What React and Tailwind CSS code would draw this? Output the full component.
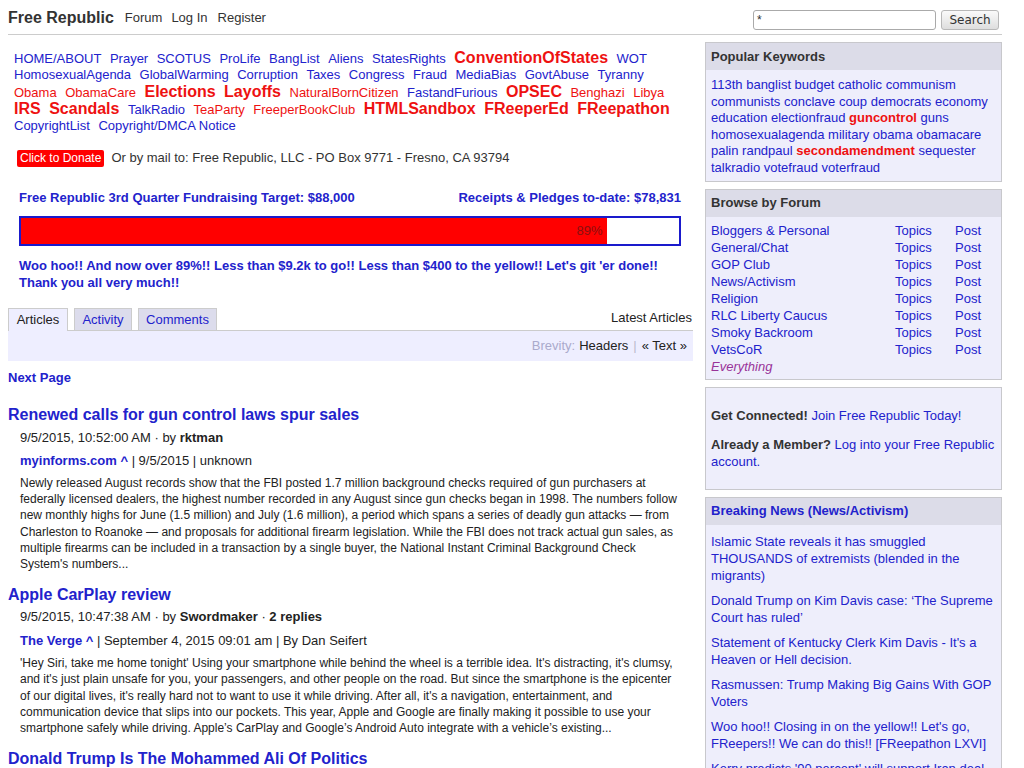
import React from "react";

function Tag({ t, big, red }) {
  if (big)
    return <a className="text-[16px] font-bold text-[#ee1111] leading-[17px]">{t}</a>;
  return <a className={`text-[13px] leading-[17px] ${red ? "text-[#ee1111]" : "text-[#2222cc]"}`}>{t}</a>;
}

const rows = [
  [["HOME/ABOUT"], ["Prayer"], ["SCOTUS"], ["ProLife"], ["BangList"], ["Aliens"], ["StatesRights"], ["ConventionOfStates", 1], ["WOT"]],
  [["HomosexualAgenda"], ["GlobalWarming"], ["Corruption"], ["Taxes"], ["Congress"], ["Fraud"], ["MediaBias"], ["GovtAbuse"], ["Tyranny"]],
  [["Obama", 0, 1], ["ObamaCare", 0, 1], ["Elections", 1], ["Layoffs", 1], ["NaturalBornCitizen", 0, 1], ["FastandFurious"], ["OPSEC", 1], ["Benghazi", 0, 1], ["Libya", 0, 1]],
  [["IRS", 1], ["Scandals", 1], ["TalkRadio"], ["TeaParty", 0, 1], ["FreeperBookClub", 0, 1], ["HTMLSandbox", 1], ["FReeperEd", 1], ["FReepathon", 1]],
  [["CopyrightList"], ["Copyright/DMCA Notice"]],
];

function Article({ title, meta, source, lines, metaGap = "mt-[4px]", sourceGap = "mt-[6px]" }) {
  return (
    <div>
      <h2 className="text-[16px] font-bold text-[#2222cc] leading-[20px]">{title}</h2>
      <div className={`pl-[12px] text-[13px] text-[#222] leading-[17px] ${metaGap}`}>{meta}</div>
      <div className={`pl-[12px] text-[13px] text-[#222] leading-[17px] ${sourceGap}`}>{source}</div>
      <p className="pl-[12px] text-[12px] text-[#222] leading-[16.2px] mt-[6px]">
        {lines.map((l, i) => (
          <span key={i} className="block whitespace-nowrap">{l}</span>
        ))}
      </p>
    </div>
  );
}

function Box({ title, titleBlue, children }) {
  return (
    <div className="border border-[#c8c8cc] bg-[#eeeefb]">
      {title && (
        <div className={`h-[27px] bg-[#dcdce8] px-[5px] flex items-center text-[13px] font-bold ${titleBlue ? "text-[#2222cc]" : "text-[#333]"}`}>
          {title}
        </div>
      )}
      {children}
    </div>
  );
}

const forums = ["Bloggers & Personal", "General/Chat", "GOP Club", "News/Activism", "Religion", "RLC Liberty Caucus", "Smoky Backroom", "VetsCoR"];

const news = [
  "Islamic State reveals it has smuggled THOUSANDS of extremists (blended in the migrants)",
  "Donald Trump on Kim Davis case: \u2018The Supreme Court has ruled\u2019",
  "Statement of Kentucky Clerk Kim Davis - It's a Heaven or Hell decision.",
  "Rasmussen: Trump Making Big Gains With GOP Voters",
  "Woo hoo!! Closing in on the yellow!! Let's go, FReepers!! We can do this!! [FReepathon LXVI]",
  "Kerry predicts '90 percent' will support Iran deal",
];

const art1 = [
  "Newly released August records show that the FBI posted 1.7 million background checks required of gun purchasers at",
  "federally licensed dealers, the highest number recorded in any August since gun checks began in 1998. The numbers follow",
  "new monthly highs for June (1.5 million) and July (1.6 million), a period which spans a series of deadly gun attacks \u2014 from",
  "Charleston to Roanoke \u2014 and proposals for additional firearm legislation. While the FBI does not track actual gun sales, as",
  "multiple firearms can be included in a transaction by a single buyer, the National Instant Criminal Background Check",
  "System's numbers...",
];

const art2 = [
  "'Hey Siri, take me home tonight' Using your smartphone while behind the wheel is a terrible idea. It's distracting, it's clumsy,",
  "and it's just plain unsafe for you, your passengers, and other people on the road. But since the smartphone is the epicenter",
  "of our digital lives, it's really hard not to want to use it while driving. After all, it's a navigation, entertainment, and",
  "communication device that slips into our pockets. This year, Apple and Google are finally making it possible to use your",
  "smartphone safely while driving. Apple\u2019s CarPlay and Google\u2019s Android Auto integrate with a vehicle\u2019s existing...",
];

export default function App() {
  return (
    <div className="w-[994px] ml-2 font-['Liberation_Sans',Arial,sans-serif] text-[13px] text-[#333] bg-white">
      {/* header */}
      <div className="h-[35px] pt-[2px] border-b border-[#cccccc] flex items-center">
        <span className="text-[16px] font-bold text-[#333] leading-[20px]">Free Republic</span>
        <a className="ml-[11px] text-[13px] text-[#333]">Forum</a>
        <a className="ml-[9px] text-[13px] text-[#333]">Log In</a>
        <a className="ml-[10px] text-[13px] text-[#333]">Register</a>
        <div className="ml-auto mr-[3px] mt-[4px] flex items-center gap-[5px]">
          <div className="w-[183px] h-[20px] border border-[#aaa] rounded-[3px] bg-white px-[3px] text-[12px] leading-[18px] text-[#333]">*</div>
          <button className="w-[58px] h-[20px] border border-[#b8b8b8] rounded-[3px] bg-gradient-to-b from-[#fafafa] to-[#dedede] text-[12px] text-[#333] font-['DejaVu_Sans',sans-serif] leading-[18px]">
            Search
          </button>
        </div>
      </div>

      <div className="flex gap-[12px]">
        {/* left column */}
        <div className="w-[685px]">
          <div className="pt-[14px] pl-[6px]">
            {rows.map((r, i) => (
              <div key={i} className="flex items-baseline gap-x-[8.5px] h-[17px] leading-[17px]">
                {r.map(([t, big, red]) => (
                  <Tag key={t} t={t} big={big} red={red} />
                ))}
              </div>
            ))}
          </div>

          <div className="mt-[15px] ml-[9px] flex items-center h-[18px]">
            <span className="bg-[#ff0000] text-white text-[12px] leading-[17px] px-[3px] rounded-[2px]">Click to Donate</span>
            <span className="ml-[7px] text-[13px] text-[#333]">Or by mail to: Free Republic, LLC - PO Box 9771 - Fresno, CA 93794</span>
          </div>

          <div className="ml-[11px] w-[662px] mt-[23px]">
            <div className="flex justify-between text-[13px] font-bold text-[#2222cc] leading-[16px]">
              <span>Free Republic 3rd Quarter Fundraising Target: $88,000</span>
              <span>Receipts &amp; Pledges to-date: $78,831</span>
            </div>
            <div className="mt-[10px] h-[30px] border-2 border-[#1a1acc] bg-white flex">
              <div className="w-[89%] bg-[#ff0000] flex items-center justify-end pr-[4px] text-[13px] text-[#8a1010]">89%</div>
            </div>
            <div className="mt-[11px] text-[13px] font-bold text-[#2222cc] leading-[17px]">
              Woo hoo!! And now over 89%!! Less than $9.2k to go!! Less than $400 to the yellow!! Let's git 'er done!!
              <br />
              Thank you all very much!!
            </div>
          </div>

          {/* tabs */}
          <div className="mt-[17px] flex items-end h-[23px] -mb-px relative z-10">
            <div className="w-[60px] text-center h-[23px] border border-b-0 border-[#cccccc] bg-[#eeeeff] leading-[22px] text-[#222]">Articles</div>
            <div className="w-[58px] text-center ml-[6px] mb-px h-[22px] border border-b-0 border-[#cccccc] bg-[#dcdcec] leading-[22px] text-[#2222cc]">Activity</div>
            <div className="w-[79px] text-center ml-[6px] mb-px h-[22px] border border-b-0 border-[#cccccc] bg-[#dcdcec] leading-[22px] text-[#2222cc]">Comments</div>
            <div className="ml-auto self-start mt-px leading-[17px] mr-px text-[#222]">Latest Articles</div>
          </div>
          <div className="h-[31px] border-t border-[#cccccc] bg-[#eeeeff] flex items-center justify-end pr-[6px] text-[13px]">
            <span className="text-[#aaaacc]">Brevity:</span>
            <span className="ml-[4px] text-[#222]">Headers</span>
            <span className="mx-[5px] text-[#bbbbcc]">|</span>
            <span className="text-[#222]">« Text »</span>
          </div>

          <div className="mt-[8px] text-[13px] font-bold text-[#2222cc] leading-[17px]">Next Page</div>

          <div className="mt-[19px] flex flex-col gap-[13px]">
            <Article
              title="Renewed calls for gun control laws spur sales"
              meta={<>9/5/2015, 10:52:00 AM · by <b>rktman</b></>}
              source={<><b className="text-[#2222cc]">myinforms.com ^</b> | 9/5/2015 | unknown</>}
              lines={art1}
            />
            <Article
              title="Apple CarPlay review"
              meta={<>9/5/2015, 10:47:38 AM · by <b>Swordmaker</b> · <b>2 replies</b></>}
              source={<><b className="text-[#2222cc]">The Verge ^</b> | September 4, 2015 09:01 am | By Dan Seifert</>}
              lines={art2}
              metaGap="mt-[3px]"
              sourceGap="mt-[7px]"
            />
            <div>
              <h2 className="text-[16px] font-bold text-[#2222cc] leading-[20px]">Donald Trump Is The Mohammed Ali Of Politics</h2>
              <div className="pl-[12px] text-[13px] text-[#222] leading-[17px] mt-[4px]">
                9/5/2015, 10:40:12 AM · by <b>Elderberry</b>
              </div>
            </div>
          </div>
        </div>

        {/* right column */}
        <div className="w-[297px] pt-[7px] flex flex-col gap-[7px]">
          <Box title="Popular Keywords">
            <div className="px-[5px] pt-[7px] pb-[4px] text-[13px] leading-[16.6px] text-[#2222cc]">
              113th banglist budget catholic communism communists conclave coup democrats economy education electionfraud{" "}
              <b className="text-[#ee1111]">guncontrol</b> guns homosexualagenda military obama obamacare palin randpaul{" "}
              <b className="text-[#ee1111]">secondamendment</b> sequester talkradio votefraud voterfraud
            </div>
          </Box>

          <Box title="Browse by Forum">
            <div className="px-[5px] pt-[5px] pb-[4px] text-[13px] leading-[17px] text-[#2222cc]">
              <div className="grid grid-cols-[184px_60px_auto]">
                {forums.map((f) => (
                  <React.Fragment key={f}>
                    <span>{f}</span>
                    <span>Topics</span>
                    <span>Post</span>
                  </React.Fragment>
                ))}
              </div>
              <div className="italic text-[#993399]">Everything</div>
            </div>
          </Box>

          <Box>
            <div className="px-[5px] pt-[19px] pb-[19px] text-[13px] leading-[17px] text-[#2222cc]">
              <p>
                <b className="text-[#333]">Get Connected!</b> Join Free Republic Today!
              </p>
              <p className="mt-[12px]">
                <b className="text-[#333]">Already a Member?</b> Log into your Free Republic account.
              </p>
            </div>
          </Box>

          <Box title="Breaking News (News/Activism)" titleBlue>
            <div className="px-[5px] pt-[8px] pb-[10px] text-[13px] leading-[17px] text-[#2222cc] flex flex-col gap-[8px]">
              {news.map((n) => (
                <div key={n}>{n}</div>
              ))}
            </div>
          </Box>
        </div>
      </div>
    </div>
  );
}
